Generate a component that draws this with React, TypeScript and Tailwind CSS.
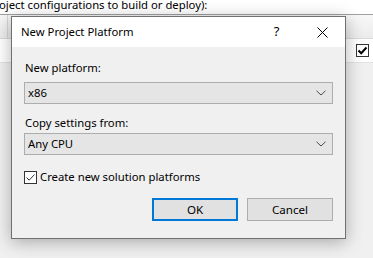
const FONT = "font-['Noto_Sans','Liberation_Sans',sans-serif]";

function Chevron() {
  return (
    <svg width="10" height="6" viewBox="0 0 10 6">
      <polyline points="0.5,0.8 5,5 9.5,0.8" fill="none" stroke="#4d4d4d" strokeWidth="1" />
    </svg>
  );
}

function Combo({ value }: { value: string }) {
  return (
    <div className="flex h-[22px] items-center justify-between border border-[#adadad] bg-[#e5e5e5] pl-[3px] pr-[6px]">
      <span className="text-[11.3px] leading-4 text-black">{value}</span>
      <Chevron />
    </div>
  );
}

function CheckMark({ bold }: { bold?: boolean }) {
  return (
    <svg width="11" height="11" viewBox="0 0 11 11">
      <polyline
        points="1.5,5.5 4.2,8.2 9.5,2.5"
        fill="none"
        stroke={bold ? '#000' : '#333'}
        strokeWidth={bold ? 2 : 1}
      />
    </svg>
  );
}

export default function App() {
  return (
    <div className={`relative h-[258px] w-[373px] overflow-hidden bg-[#f0f0f0] ${FONT}`}>
      {/* page behind the dialog */}
      <div className="h-[15px] overflow-hidden border-b border-[#a0a0a0] bg-white">
        <p className="-ml-[1px] -mt-[2px] whitespace-nowrap text-[11.3px] leading-[14px] text-black">
          oject configurations to build or deploy):
        </p>
      </div>
      <div className="flex h-[24px] border-b border-[#dadada] bg-gradient-to-b from-[#f7f7f7] to-[#ececec]">
        <div className="w-[8px] border-r border-[#d8d8d8]" />
      </div>
      <div className="flex h-[24px] items-center justify-end border-b border-[#e3e3e3] bg-white pr-[4px]">
        <span className="grid h-[13px] w-[13px] place-items-center border border-[#333] bg-white">
          <CheckMark bold />
        </span>
      </div>

      {/* dialog */}
      <div className="absolute left-[11px] top-[16px] flex h-[223px] w-[335px] flex-col border border-[#707070] bg-[#f0f0f0] shadow-[0_3px_16px_rgba(0,0,0,0.3)]">
        <div className="flex h-[30px] items-center bg-white pl-[9px]">
          <span className="flex-1 text-[11.3px] leading-4 text-black">New Project Platform</span>
          <span className="grid h-full w-[45px] place-items-center text-[13px] text-black">?</span>
          <span className="grid h-full w-[46px] place-items-center">
            <svg width="11" height="11" viewBox="0 0 11 11">
              <path d="M0.5 0.5 L10.5 10.5 M10.5 0.5 L0.5 10.5" stroke="#000" strokeWidth="1" fill="none" />
            </svg>
          </span>
        </div>

        <div className="flex flex-col px-3">
          <label className="mt-[13px] pl-[1px] text-[11.3px] leading-4 text-black">New platform:</label>
          <div className="mt-[6px]">
            <Combo value="x86" />
          </div>
          <label className="mt-[11px] pl-[1px] text-[11.3px] leading-4 text-black">Copy settings from:</label>
          <div className="mt-[2px]">
            <Combo value="Any CPU" />
          </div>

          <div className="mt-[14px] flex h-4 items-center gap-[3px]">
            <span className="grid h-[13px] w-[13px] place-items-center border border-[#333] bg-white">
              <CheckMark />
            </span>
            <span className="text-[11.3px] leading-4 text-black">Create new solution platforms</span>
          </div>

          <div className="mt-[13px] flex justify-end gap-[9px]">
            <button className="h-[23px] w-[86px] border-2 border-[#0078d7] bg-[#e1e1e1] text-[11.6px] text-black">
              OK
            </button>
            <button className="h-[23px] w-[86px] border border-[#adadad] bg-[#e1e1e1] text-[11.6px] text-black">
              Cancel
            </button>
          </div>
        </div>
      </div>
    </div>
  );
}
